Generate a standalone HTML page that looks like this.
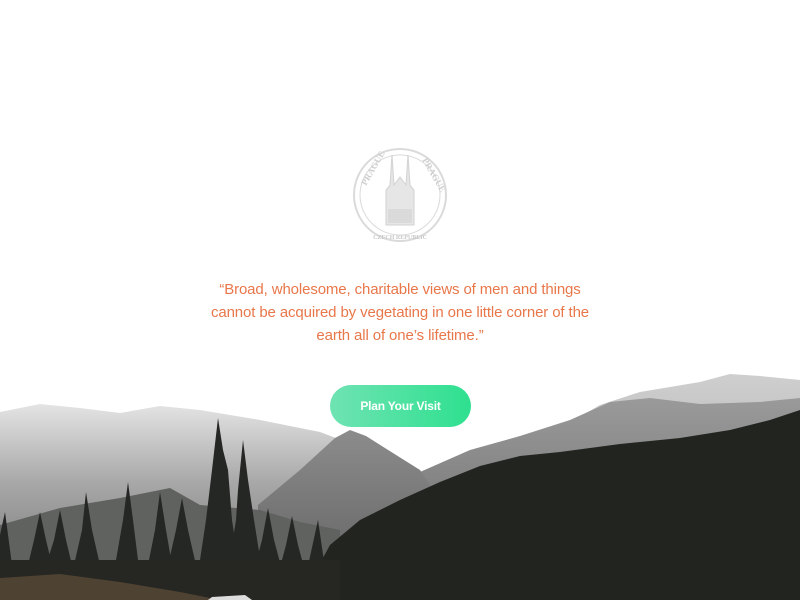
<!DOCTYPE html>
<html><head><meta charset="utf-8"><style>
html,body{margin:0;padding:0;width:800px;height:600px;overflow:hidden;background:#fff;font-family:"Liberation Sans",sans-serif;position:relative}
.q{position:absolute;top:278px;left:0;width:800px;text-align:center;color:#e8774a;font-size:15px;line-height:23px;letter-spacing:-0.12px}
.btn{position:absolute;left:330px;top:385px;width:141px;height:42px;border-radius:21px;background:linear-gradient(90deg,#6fe3b3,#2ee08f);color:#fff;font-size:12px;font-weight:bold;text-align:center;line-height:42px;letter-spacing:-0.2px}
svg.bg{position:absolute;left:0;top:0}
</style></head><body>
<svg class="bg" width="800" height="600" viewBox="0 0 800 600">
<defs>
<linearGradient id="far" x1="0" y1="0" x2="0" y2="1"><stop offset="0" stop-color="#cfcfcf"/><stop offset="1" stop-color="#9a9a9a"/></linearGradient>
<linearGradient id="mist" x1="0" y1="0" x2="0" y2="1"><stop offset="0" stop-color="#e4e4e4"/><stop offset="0.4" stop-color="#a8a8a8"/><stop offset="1" stop-color="#6e6e6e"/></linearGradient>
<linearGradient id="mid" x1="0" y1="0" x2="0" y2="1"><stop offset="0" stop-color="#9a9a9a"/><stop offset="1" stop-color="#666"/></linearGradient>
<linearGradient id="peak" x1="0" y1="0" x2="0" y2="1"><stop offset="0" stop-color="#8c8c8c"/><stop offset="1" stop-color="#5e5e5e"/></linearGradient>
</defs>
<path d="M540 440 L600 405 L640 392 L700 382 L730 374 L760 376 L800 380 L800 600 L540 600Z" fill="url(#far)"/>
<path d="M0 412 L40 404 L80 408 L120 413 L160 406 L200 410 L260 420 L320 432 L420 470 L420 600 L0 600Z" fill="url(#mist)"/>
<path d="M420 472 L470 450 L520 436 L570 420 L610 402 L650 398 L700 404 L760 402 L800 398 L800 600 L420 600Z" fill="url(#mid)"/>
<path d="M258 505 L300 470 L335 438 L350 430 L366 436 L420 470 L440 500 L440 600 L258 600Z" fill="url(#peak)"/>
<path d="M0 525 L60 508 L120 498 L170 488 L200 505 L260 510 L300 522 L340 530 L340 600 L0 600Z" fill="#5f625e"/>
<path d="M330 545 L360 520 L400 500 L440 482 L480 466 L520 456 L560 452 L620 444 L680 438 L730 430 L770 420 L800 410 L800 600 L300 600Z" fill="#222420"/>
<g fill="#252724">
<path d="M218 418 L223 450 L228 470 L232 520 L238 560 L200 560 L206 520 L212 470Z"/>
<path d="M243 440 L248 480 L254 520 L262 570 L228 570 L236 520 L238 490Z"/>
<path d="M128 482 L133 520 L138 560 L116 560 L123 520Z"/>
<path d="M86 492 L92 530 L100 565 L74 565 L82 530Z"/>
<path d="M60 510 L66 540 L72 565 L46 565 L54 540Z"/>
<path d="M40 512 L46 540 L52 565 L28 565 L34 540Z"/>
<path d="M5 512 L12 565 L0 565 L0 535Z"/>
<path d="M160 492 L166 530 L172 565 L148 565 L155 530Z"/>
<path d="M182 498 L188 530 L196 565 L168 565 L176 530Z"/>
<path d="M268 508 L274 540 L282 570 L254 570 L262 540Z"/>
<path d="M292 516 L298 545 L306 575 L278 575 L286 545Z"/>
<path d="M318 520 L326 575 L306 575Z"/>
</g>
<rect x="0" y="560" width="340" height="40" fill="#262622"/>
<path d="M0 578 L60 574 L120 582 L180 592 L220 600 L0 600Z" fill="#4e4232"/>
<path d="M212 597 L245 595 L252 600 L208 600Z" fill="#ddd"/>
<g transform="translate(400,195)" fill="none" stroke="#dadada">
<circle r="46" stroke-width="2"/>
<circle r="40" stroke-width="1"/>
<path d="M-14 30 L-14 -5 L-10 -10 L-8 -40 L-6 -10 L0 -18 L6 -10 L8 -40 L10 -10 L14 -5 L14 30Z" fill="#e6e6e6" stroke="#d2d2d2"/>
<rect x="-12" y="14" width="24" height="14" fill="#dadada" stroke="none"/>
</g>
<text x="400" y="239" text-anchor="middle" font-family="Liberation Serif" font-size="6" fill="#c8c8c8" font-weight="bold">CZECH REPUBLIC</text>
<text x="366" y="186" font-family="Liberation Serif" font-size="9" fill="#cfcfcf" font-weight="bold" transform="rotate(-60 366 186)">PRAGUE</text>
<text x="422" y="160" font-family="Liberation Serif" font-size="9" fill="#cfcfcf" font-weight="bold" transform="rotate(60 422 160)">PRAGUE</text>
</svg>
<div class="q">“Broad, wholesome, charitable views of men and things<br>cannot be acquired by vegetating in one little corner of the<br>earth all of one’s lifetime.”</div>
<div class="btn">Plan Your Visit</div>
</body></html>
